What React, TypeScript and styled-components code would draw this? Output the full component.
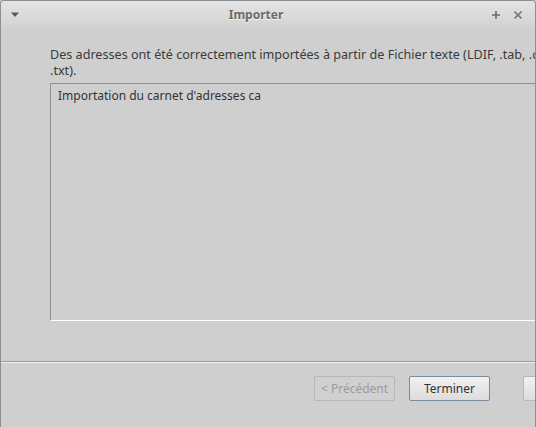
import { createGlobalStyle } from "styled-components";
import styled from "styled-components";

const GlobalStyle = createGlobalStyle`
  html, body {
    margin: 0;
    padding: 0;
    background: #cfcfcf;
  }
  body {
    font-family: "Noto Sans", "Open Sans", "DejaVu Sans", sans-serif;
    font-size: 12px;
    color: #333;
  }
`;

const Window = styled.div`
  width: 536px;
  height: 427px;
  box-sizing: border-box;
  border: 1px solid #8e8e8e;
  border-bottom: none;
  border-radius: 4px 4px 0 0;
  background: #cfcfcf;
  overflow: hidden;
  display: flex;
  flex-direction: column;
`;

const TitleBar = styled.div`
  height: 27px;
  flex: none;
  display: grid;
  grid-template-columns: 30px 1fr 54px;
  align-items: center;
  background: linear-gradient(#e4e4e4, #d2d2d2);
`;

const Title = styled.div`
  text-align: center;
  font-weight: bold;
  font-size: 12px;
  color: #6a6a6a;
  text-shadow: 0 1px 0 #f4f4f4;
`;

const TitleButtons = styled.div`
  display: flex;
  align-items: center;
  gap: 14px;
  padding-left: 11px;
`;

const MenuArrow = styled.div`
  padding-left: 10px;
  display: flex;
  align-items: center;
`;

const Body = styled.div`
  flex: none;
  padding: 19px 0 0 49px;
  display: flex;
  flex-direction: column;
`;

const Message = styled.div`
  line-height: 16px;
  font-size: 12.6px;
  white-space: nowrap;
  color: #3a3a3a;
`;

const LogBox = styled.div`
  margin-top: 4px;
  height: 238px;
  width: 600px;
  box-sizing: border-box;
  border-top: 1px solid #8f8f8f;
  border-left: 1px solid #8f8f8f;
  border-bottom: 1px solid #ffffff;
  padding: 4px 0 0 7px;
  line-height: 16px;
  color: #333;
`;

const Separator = styled.div`
  margin-top: 40px;
  height: 1px;
  background: #999999;
  border-bottom: 1px solid #f2f2f2;
  flex: none;
`;

const Footer = styled.div`
  display: flex;
  padding: 13px 0 0 313px;
  gap: 14px;
`;

const Button = styled.button<{ $disabled?: boolean; $default?: boolean; $gap?: number }>`
  flex: none;
  width: 81px;
  height: 25px;
  box-sizing: border-box;
  font-family: inherit;
  font-size: 12px;
  border-radius: 2px;
  padding: 0;
  margin-left: ${(p) => p.$gap ?? 0}px;
  color: ${(p) => (p.$disabled ? "#9b9b9b" : "#333")};
  border: 1px solid ${(p) => (p.$default ? "#7c8a9e" : "#b7b7b7")};
  background: ${(p) =>
    p.$disabled ? "#d0d0d0" : "linear-gradient(#f2f2f2, #dcdcdc)"};
`;

export default function App() {
  return (
    <>
      <GlobalStyle />
      <Window>
        <TitleBar>
          <MenuArrow>
            <svg width="9" height="6" viewBox="0 0 9 6">
              <path d="M0 0.5 H8 L4 5 Z" fill="#5a5a5a" />
            </svg>
          </MenuArrow>
          <Title>Importer</Title>
          <TitleButtons>
            <svg width="8" height="8" viewBox="0 0 8 8">
              <path d="M4 0 V8 M0 4 H8" stroke="#6a6a6a" strokeWidth="1.6" />
            </svg>
            <svg width="8" height="8" viewBox="0 0 8 8">
              <path d="M0.5 0.5 L7.5 7.5 M7.5 0.5 L0.5 7.5" stroke="#7a7a7a" strokeWidth="1.6" />
            </svg>
          </TitleButtons>
        </TitleBar>
        <Body>
          <Message>
            Des adresses ont été correctement importées à partir de Fichier texte (LDIF, .tab, .csv,
            <br />
            .txt).
          </Message>
          <LogBox>Importation du carnet d'adresses ca</LogBox>
        </Body>
        <Separator />
        <Footer>
          <Button $disabled disabled>
            &lt; Précédent
          </Button>
          <Button $default>Terminer</Button>
          <Button $gap={19}>Annuler</Button>
        </Footer>
      </Window>
    </>
  );
}
